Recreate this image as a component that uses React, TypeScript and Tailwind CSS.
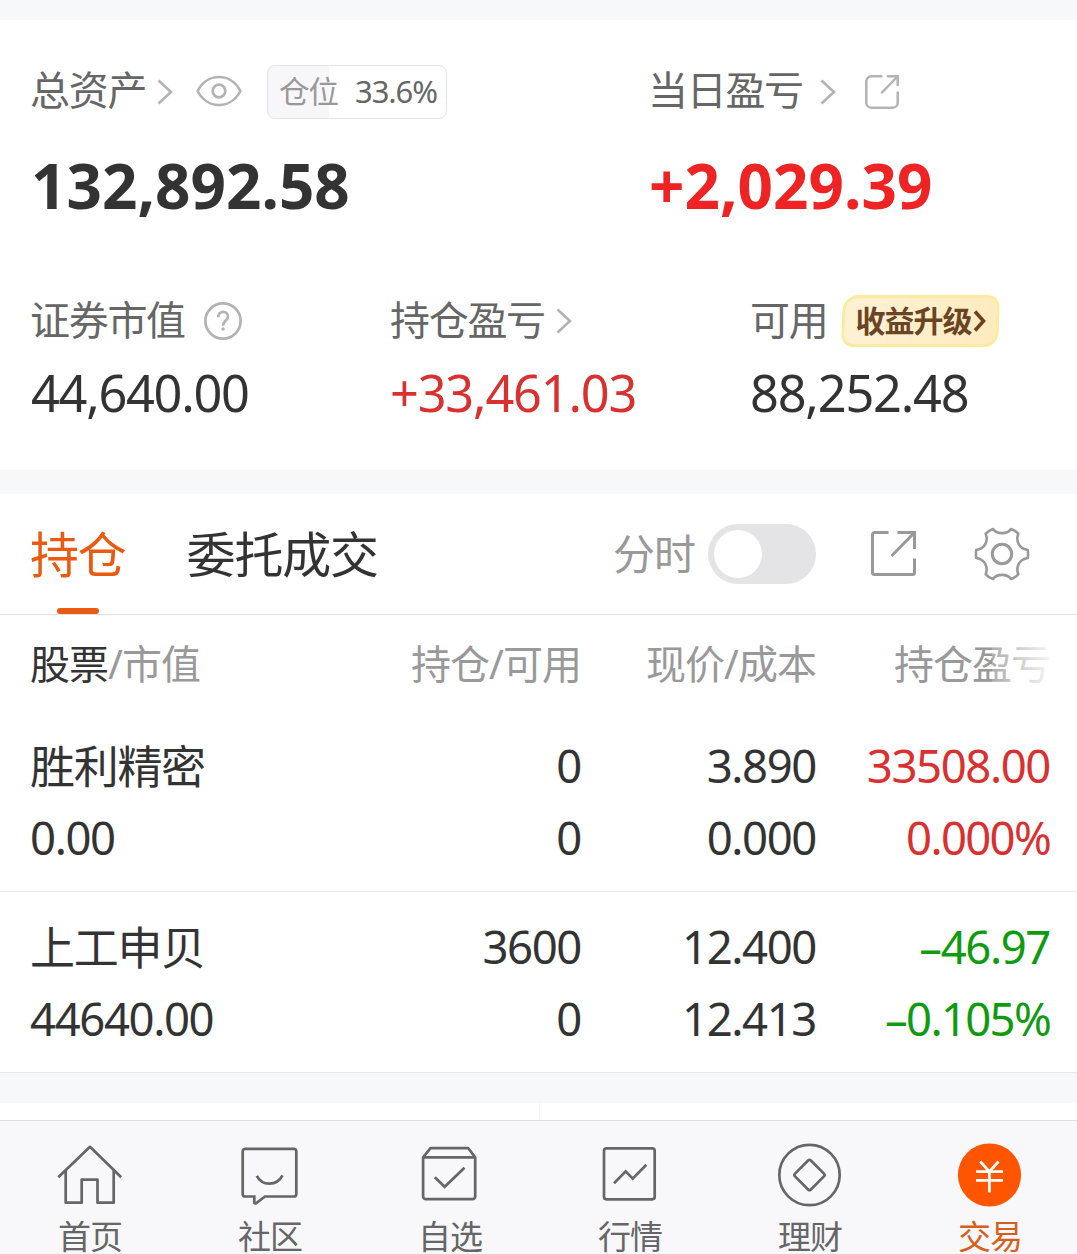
import type { ReactNode } from "react";
import clsx from "clsx";

const holdings = [
  {
    name: "胜利精密",
    marketValue: "0.00",
    amount: "0",
    available: "0",
    price: "3.890",
    cost: "0.000",
    profit: "33508.00",
    profitRate: "0.000%",
    up: true,
  },
  {
    name: "上工申贝",
    marketValue: "44640.00",
    amount: "3600",
    available: "0",
    price: "12.400",
    cost: "12.413",
    profit: "–46.97",
    profitRate: "–0.105%",
    up: false,
  },
];

const Chevron = ({ className }: { className?: string }) => (
  <svg className={className} width="16" height="26" viewBox="0 0 16 26" fill="none" stroke="#b3b3b3" strokeWidth="2.6">
    <path d="M1.5 1.5 14 13 1.5 24.5" />
  </svg>
);

const EyeIcon = () => (
  <svg width="46" height="32" viewBox="0 0 46 32" fill="none" stroke="#b3b3b3" strokeWidth="2.7">
    <path d="M1.6 16C6 7.500 14 2 23 2s17 5.500 21.400 14C40 24.500 32 30 23 30S6 24.500 1.600 16Z" strokeLinejoin="round" />
    <circle cx="23" cy="16" r="6.300" />
  </svg>
);

const HelpIcon = () => (
  <svg width="40" height="40" viewBox="0 0 40 40" fill="none" stroke="#b3b3b3" strokeWidth="2.7">
    <circle cx="20" cy="20" r="17.600" />
    <path d="M15.200 16.200c0-3.300 2-5.300 4.900-5.300s4.900 2 4.900 4.700c0 4.200-4.900 4.300-4.900 8.400v.8" />
    <circle cx="20.100" cy="28" r="1.700" fill="#b3b3b3" stroke="none" />
  </svg>
);

const ShareRoundIcon = () => (
  <svg width="36" height="36" viewBox="0 0 36 36" fill="none" stroke="#b3b3b3" strokeWidth="2.500" strokeLinecap="round">
    <path d="M17.500 2.300H7.300a5 5 0 0 0-5 5v21.400a5 5 0 0 0 5 5h21.400a5 5 0 0 0 5-5V18.500" />
    <path d="M24 2.300h9.700V11M33 3 18 18.500" />
  </svg>
);

const ShareIcon = () => (
  <svg width="48" height="48" viewBox="0 0 48 48" fill="none" stroke="#999" strokeWidth="3">
    <path d="M19.500 2.500H5.500a2 2 0 0 0-2 2v38a2 2 0 0 0 2 2h38a2 2 0 0 0 2-2V28.500" />
    <path d="M28.500 2.500h17V19M45 3 22.500 26" />
  </svg>
);

const GearIcon = () => (
  <svg width="56" height="56" viewBox="-28 -28 56 56" fill="none" stroke="#999" strokeWidth="2.600" strokeLinejoin="round">
    <path d="M-25.800-4C-17-5.500-13.500-13-16.300-20.300Q-13-23.800-9-25C-5.500-19.500 5.500-19.500 9-25Q13-23.800 16.300-20.300C13.500-13 17-5.500 25.800-4Q26.300 0 25.800 4C17 5.500 13.500 13 16.300 20.300Q13 23.800 9 25C5.500 19.500-5.500 19.500-9 25Q-13 23.800-16.300 20.300C-13.500 13-17 5.500-25.800 4Q-26.300 0-25.800-4Z" />
    <circle r="9.700" strokeWidth="3" />
  </svg>
);

const NavIcon = ({ children }: { children: ReactNode }) => (
  <svg width="64" height="64" viewBox="0 0 64 64" fill="none" stroke="#666" strokeWidth="2.700" className="overflow-visible">
    {children}
  </svg>
);

const navItems = [
  {
    label: "首页",
    icon: (
      <NavIcon>
        <path d="M.3 34.300 32 3.800l31.200 30.500M7.700 27.500v32.200h16V36.600h15.800v23.100h16.200V27.500" strokeLinejoin="round" />
      </NavIcon>
    ),
  },
  {
    label: "社区",
    icon: (
      <NavIcon>
        <path d="M7.300 5.800h48.400a2.600 2.600 0 0 1 2.600 2.600v42.500a2.600 2.600 0 0 1-2.600 2.600H27L18 60.300c-1 .5-1.700 0-1.700-.8v-6h-9a2.600 2.600 0 0 1-2.600-2.600V8.400a2.600 2.600 0 0 1 2.600-2.600Z" />
        <path d="M18.800 32.800c5.500 10.500 20 10.500 25.700-.5" />
      </NavIcon>
    ),
  },
  {
    label: "自选",
    icon: (
      <NavIcon>
        <path d="M5.100 14.300 12.500 5.200h37.800l6.900 9.100v39a2.800 2.800 0 0 1-2.800 2.900H7.900a2.800 2.800 0 0 1-2.800-2.900ZM5.100 14.300h52.100" strokeLinejoin="round" />
        <path d="M16.800 34.200 26.700 43.800 46.500 24.800" />
      </NavIcon>
    ),
  },
  {
    label: "行情",
    icon: (
      <NavIcon>
        <rect x="6" y="5.300" width="50.700" height="51" rx="2.500" />
        <path d="M16 40.200 27.700 28.400l7 7.200L48.300 21.800" />
      </NavIcon>
    ),
  },
  {
    label: "理财",
    icon: (
      <NavIcon>
        <circle cx="31.500" cy="32" r="30.200" />
        <rect x="20.300" y="20.800" width="22.400" height="22.400" rx="2" transform="rotate(45 31.500 32)" />
      </NavIcon>
    ),
  },
  {
    label: "交易",
    active: true,
    icon: (
      <NavIcon>
        <circle cx="31.500" cy="32" r="31.600" fill="#ff5500" stroke="none" />
        <path d="M22.300 18.500 31.400 28.700 40.500 18.500M31.400 28v21.500M18 28.600h27M18 37.300h27" stroke="#fff" />
      </NavIcon>
    ),
  },
];

function Summary() {
  return (
    <section className="h-[450px] bg-white pl-[30px]">
      <div className="grid grid-cols-[618px_1fr] pt-[43px]">
        <div>
          <div className="flex h-14 items-center text-[40px] tracking-[-1.300px] text-[#666]">
            <span className="-mt-[2px]">总资产</span>
            <Chevron className="ml-[11px] mt-[2px]" />
            <div className="ml-[23px]">
              <EyeIcon />
            </div>
            <div className="ml-[25px] mt-[2px] flex h-[54px] w-[180px] items-center rounded-lg border border-[#e4e4e8] bg-[linear-gradient(to_right,#f7f7fa_61px,#fff_61px)] pb-[2px] pl-[11px]">
              <span className="text-[30.500px] tracking-[-1px] text-[#999]">仓位</span>
              <span className="ml-[17px] text-[31px] tracking-[-1.100px]">33.6%</span>
            </div>
          </div>
          <div className="mt-[31px] flex h-[70px] items-center pl-px text-[62px] font-bold text-[#333]">132,892.58</div>
        </div>
        <div>
          <div className="flex h-14 items-center text-[40px] tracking-[-1.300px] text-[#666]">
            <span className="-mt-[2px]">当日盈亏</span>
            <Chevron className="ml-[17px] mt-[2px]" />
            <div className="ml-[28px] mt-[2px]">
              <ShareRoundIcon />
            </div>
          </div>
          <div className="mt-[31px] flex h-[70px] items-center pl-px text-[62px] font-bold text-[#ee2424]">+2,029.39</div>
        </div>
      </div>

      <div className="mt-[73px] grid grid-cols-[360px_360px_1fr]">
        <div>
          <div className="flex h-14 items-center text-[40px] tracking-[-1.300px] text-[#666]">
            <span className="-mt-[2px]">证券市值</span>
            <div className="ml-[18px]">
              <HelpIcon />
            </div>
          </div>
          <div className="mt-[14px] flex h-[60px] items-center pl-px text-[50.500px] tracking-[-1.300px] text-[#333]">44,640.00</div>
        </div>
        <div>
          <div className="flex h-14 items-center text-[40px] tracking-[-1.300px] text-[#666]">
            <span className="-mt-[2px]">持仓盈亏</span>
            <Chevron className="ml-[11px]" />
          </div>
          <div className="mt-[14px] flex h-[60px] items-center text-[50.500px] tracking-[-1.200px] text-[#d93030]">+33,461.03</div>
        </div>
        <div>
          <div className="flex h-14 items-center text-[40px] tracking-[-1.300px] text-[#666]">
            <span className="-mt-[2px]">可用</span>
            <div className="relative ml-[15px] flex h-[52px] w-[157px] items-center pl-[13px]">
              <div className="absolute inset-0 -skew-x-2 rounded-[12px] rounded-tl-[16px] rounded-br-[14px] border-[3px] border-[#faeb9f] bg-linear-to-r from-[#fdf1d4] to-[#feebc0]" />
              <span className="relative text-[30px] font-bold tracking-[-1px] text-[#6b4423]">收益升级</span>
              <svg className="relative ml-[2px]" width="14" height="22" viewBox="0 0 14 22" fill="none" stroke="#6b4423" strokeWidth="3.600">
                <path d="M2 1.500 10.500 11 2 20.500" />
              </svg>
            </div>
          </div>
          <div className="mt-[14px] flex h-[60px] items-center text-[50.500px] tracking-[-1.200px] text-[#333]">88,252.48</div>
        </div>
      </div>
    </section>
  );
}

function Toolbar() {
  return (
    <div className="flex h-[121px] items-center border-b border-[#e0e0e0] pl-[30px] pr-[47px]">
      <div className="relative flex h-full items-center text-[49px] tracking-[-1.200px] text-[#ea5a10]">
        持仓
        <span className="absolute bottom-0 left-[27px] h-[6px] w-[42px] rounded-full bg-[#ea5a10]" />
      </div>
      <div className="ml-[61px] text-[49px] tracking-[-1.200px] text-[#333]">委托成交</div>
      <div className="ml-auto text-[42px] tracking-[-1px] text-[#999]">分时</div>
      <div className="ml-[13px] h-[60px] w-[108px] rounded-full bg-[#e4e4e6] p-[6px]">
        <div className="size-[48px] rounded-full bg-white" />
      </div>
      <div className="ml-[53px]">
        <ShareIcon />
      </div>
      <div className="ml-[57px]">
        <GearIcon />
      </div>
    </div>
  );
}

function HoldingTable() {
  return (
    <div>
      <div className="grid h-[98px] grid-cols-[316px_235px_235px_234px] items-center pl-[30px] text-right text-[40px] tracking-[-1px] text-[#999]">
        <div className="text-left">
          <span className="text-[#333]">股票</span>/市值
        </div>
        <div>持仓/可用</div>
        <div>现价/成本</div>
        <div className="relative">
          持仓盈亏
          <div className="absolute inset-y-0 -right-1 w-[62px] bg-linear-to-r from-white/20 to-white/95" />
        </div>
      </div>
      {holdings.map((item, i) => (
        <div
          key={item.name}
          className={clsx(
            "grid grid-cols-[316px_235px_235px_234px] items-center border-b border-[#e8e8e8] pl-[30px] text-right text-[45.500px] tracking-[-1.400px] text-[#333]",
            i === 0 ? "h-[179px] grid-rows-[72px_72px] pt-[17px]" : "h-[181px] grid-rows-[72px_72px] pt-[19px]"
          )}
        >
          <div className="text-left text-[45px] tracking-[-1.300px]">{item.name}</div>
          <div>{item.amount}</div>
          <div>{item.price}</div>
          <div className={item.up ? "text-[#d93030]" : "text-[#0f9b0f]"}>{item.profit}</div>
          <div className="text-left">{item.marketValue}</div>
          <div>{item.available}</div>
          <div>{item.cost}</div>
          <div className={clsx("tracking-[-1.700px]", item.up ? "text-[#d93030]" : "text-[#0f9b0f]")}>{item.profitRate}</div>
        </div>
      ))}
    </div>
  );
}

function BottomNav() {
  return (
    <nav className="grid h-[134px] grid-cols-[repeat(6,180px)] border-t border-[#dcdee2] bg-[#f8f8fa]">
      {navItems.map((item) => (
        <div key={item.label} className="flex flex-col items-center pt-[21.500px]">
          {item.icon}
          <span className={clsx("mt-[13.500px] text-[33px] tracking-[-1px]", item.active ? "text-[#d65f20]" : "text-[#666]")}>
            {item.label}
          </span>
        </div>
      ))}
    </nav>
  );
}

export default function App() {
  return (
    <div className="flex h-[1254px] w-[1077px] flex-col overflow-hidden whitespace-nowrap bg-[#f7f8fa] pt-5 font-['Noto_Sans','Noto_Sans_CJK_SC',sans-serif] leading-none">
      <Summary />
      <section className="mt-6 bg-white">
        <Toolbar />
        <HoldingTable />
      </section>
      <div className="mt-[30px] grid h-[17px] shrink-0 grid-cols-[540px_1fr] bg-white">
        <div className="border-r border-[#f5f5f7]" />
      </div>
      <BottomNav />
    </div>
  );
}
